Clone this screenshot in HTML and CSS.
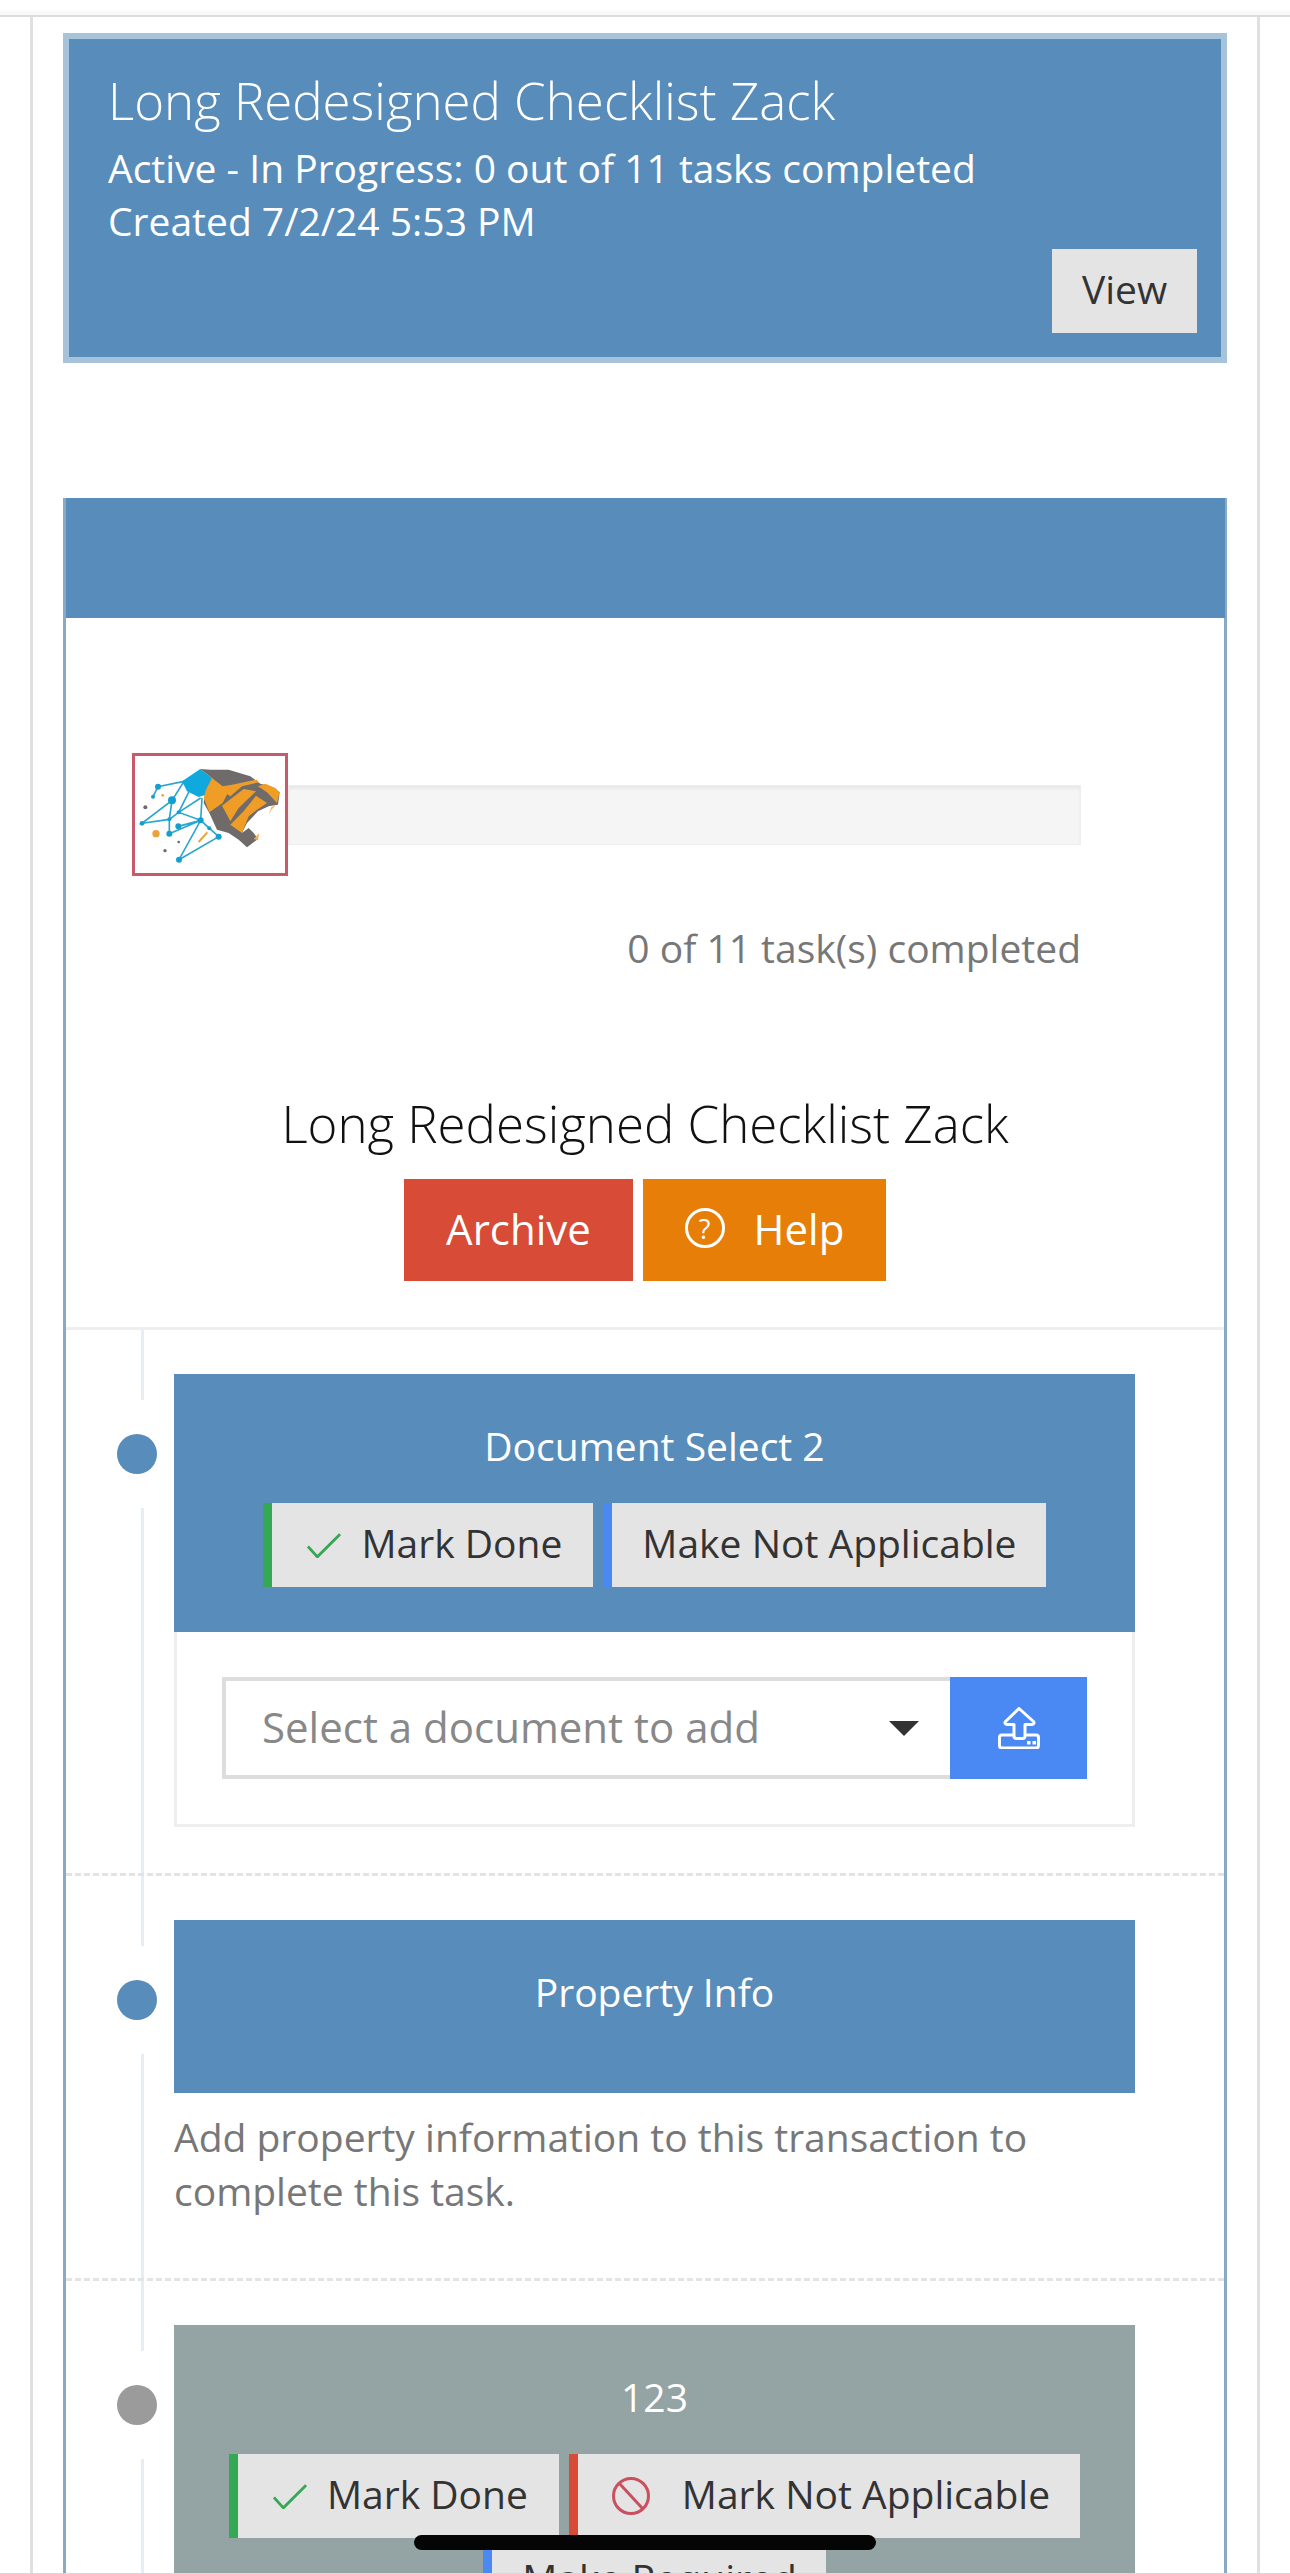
FILE: index.html
```html
<!DOCTYPE html>
<html lang="en">
<head>
<meta charset="utf-8">
<title>Long Redesigned Checklist Zack</title>
<link rel="stylesheet" href="styles.css">
</head>
<body>
<div class="topbar"></div>
<main class="frame">
  <section class="summary">
    <h2 class="summary-title">Long Redesigned Checklist Zack</h2>
    <p class="summary-line">Active - In Progress: 0 out of 11 tasks completed</p>
    <p class="summary-line">Created 7/2/24 5:53 PM</p>
    <div class="summary-actions"><a class="btn-view">View</a></div>
  </section>

  <section class="checklist">
    <header class="checklist-bar"></header>
    <div class="intro">
      <div class="progress-row">
        <div class="logo">
          <svg viewBox="75 79 450 351" width="150" height="117" aria-hidden="true">
            <g stroke="#2ba6cf" stroke-width="5" fill="none">
              <path d="M222 155 144 171 129 201M222 155 186 212 96 281 178 269 206 248 272 272 178 312 178 269 186 212M240 180 206 248M272 205 206 248M276 205 272 272 207 390 326 321 272 272 298 296M205 290 272 272"/>
            </g>
            <g fill="#159fd0">
              <circle cx="144" cy="171" r="9"/><circle cx="129" cy="201" r="6"/><circle cx="186" cy="212" r="12"/>
              <circle cx="96" cy="281" r="7"/><circle cx="178" cy="269" r="6"/><circle cx="206" cy="248" r="6"/>
              <circle cx="272" cy="272" r="9"/><circle cx="205" cy="290" r="9"/><circle cx="178" cy="312" r="9"/>
              <circle cx="298" cy="296" r="6"/><circle cx="326" cy="321" r="9"/><circle cx="207" cy="390" r="9"/>
            </g>
            <g fill="#6d6870">
              <circle cx="106" cy="233" r="6"/><circle cx="165" cy="363" r="5"/><circle cx="206" cy="337" r="4"/>
            </g>
            <circle cx="138" cy="312" r="11" fill="#e9a23c"/>
            <circle cx="158" cy="197" r="4" fill="#e9a23c"/>
            <path d="M266 337 292 308" stroke="#e9a23c" stroke-width="6" fill="none"/>
            <g transform="translate(66 70)">
              <polygon fill="#0fa9de" points="150,85 205,48 240,75 222,125 200,132 165,115"/>
              <polygon fill="#6f6b6b" points="205,48 235,50 290,50 355,70 385,92 415,100 443,118 438,155 410,160 378,175 345,210 330,240 350,225 365,240 378,258 345,283 320,260 290,240 255,230 232,180 215,150 218,125 240,75"/>
              <polygon fill="#f09d27" points="240,75 272,100 300,95 272,150 232,178 215,135 222,110"/>
              <polygon fill="#f09d27" points="272,115 300,95 375,80 380,88 330,100 295,130"/>
              <polygon fill="#f09d27" points="270,158 335,108 372,115 320,165 295,205 282,180"/>
              <polygon fill="#f09d27" points="372,128 405,150 375,170 350,190 330,240 295,215 335,175"/>
              <polygon fill="#f09d27" points="400,92 430,105 443,118 435,150 405,118 378,100"/>
              <polygon fill="#efae5c" points="410,185 418,162 430,158 418,170"/>
              <polygon fill="#efae5c" points="365,258 382,240 378,262"/>
            </g>
          </svg>
        </div>
        <div class="progress-track"></div>
      </div>
      <p class="progress-count">0 of 11 task(s) completed</p>
      <h2 class="checklist-title">Long Redesigned Checklist Zack</h2>
      <div class="checklist-actions">
        <a class="btn-solid btn-archive">Archive</a>
        <a class="btn-solid btn-help"><span class="help-mark">?</span>Help</a>
      </div>
    </div>

    <div class="steps">
      <article class="step">
        <div class="dot-wrap"><span class="dot dot-blue"></span></div>
        <div class="step-head">
          <h3 class="step-title">Document Select 2</h3>
          <div class="step-buttons">
            <a class="btn-tag tag-green">
              <svg class="ico-check" viewBox="0 0 36 26" aria-hidden="true"><path d="M1 14 11 25 35 1"/></svg>Mark Done</a>
            <a class="btn-tag tag-blue">Make Not Applicable</a>
          </div>
        </div>
        <div class="step-body">
          <div class="doc-picker">
            <div class="doc-select"><span>Select a document to add</span><i class="caret"></i></div>
            <a class="doc-upload">
              <svg viewBox="0 0 42 42" width="42" height="42" aria-hidden="true">
                <path class="up-line" d="M21 1.500 7.500 14.500c-1 1-.5 3 1.200 3H16V29c0 1.500 1 2.500 2.500 2.500h6c1.500 0 2.500-1 2.500-2.500V17.500h7.300c1.700 0 2.200-2 1.200-3Z"/>
                <path class="up-line" d="M16 28H4c-1.500 0-2.500 1-2.500 2.500v8c0 1.500 1 2.500 2.500 2.500h34c1.500 0 2.500-1 2.500-2.500v-8c0-1.500-1-2.500-2.500-2.500H27"/>
                <rect x="29" y="34" width="3.500" height="3.500" fill="#fff"/><rect x="34.500" y="34" width="3.500" height="3.500" fill="#fff"/>
              </svg>
            </a>
          </div>
        </div>
      </article>

      <article class="step step-note-wrap">
        <div class="dot-wrap"><span class="dot dot-blue"></span></div>
        <div class="step-head step-head-plain">
          <h3 class="step-title">Property Info</h3>
        </div>
        <p class="step-note">Add property information to this transaction to complete this task.</p>
      </article>

      <article class="step step-last">
        <div class="dot-wrap"><span class="dot dot-grey"></span></div>
        <div class="step-head step-head-grey">
          <h3 class="step-title">123</h3>
          <div class="step-buttons">
            <a class="btn-tag tag-green">
              <svg class="ico-check" viewBox="0 0 36 26" aria-hidden="true"><path d="M1 14 11 25 35 1"/></svg>Mark Done</a>
            <a class="btn-tag tag-red">
              <svg class="ico-ban" viewBox="0 0 38 38" aria-hidden="true"><circle cx="19" cy="19" r="17.500"/><path d="M7 6 31 32"/></svg>Mark Not Applicable</a>
            <a class="btn-tag tag-blue">Make Required</a>
          </div>
        </div>
      </article>
    </div>
  </section>
</main>
<div class="home-indicator"></div>
<div class="bottom-edge"></div>
</body>
</html>
```
FILE: styles.css
```css
* { box-sizing: border-box; }
html, body { margin: 0; padding: 0; height: 2574px; overflow: hidden; background: #fff; }
body { font-family: "Open Sans", sans-serif; color: #333; position: relative; }
h2, h3, p { margin: 0; font-weight: 400; }

.topbar { height: 17px; border-bottom: 2px solid #dcdcdc; box-shadow: inset 0 -4px 0 #f8f8f8; }

.frame {
  margin: 0 30px;
  height: 2557px;
  padding: 16px 30px 0;
  border-left: 3px solid #e0e0e0;
  border-right: 3px solid #e0e0e0;
}

.summary {
  height: 330px;
  padding: 26px 24px 24px 39px;
  background: #578cbb;
  border: 6px solid #a7c3da;
  color: #fff;
  display: flex;
  flex-direction: column;
}
.summary-title { font-size: 51px; font-weight: 300; line-height: 70px; margin-bottom: 6px; }
.summary-line { font-size: 39px; line-height: 53px; }
.summary-actions { margin-top: auto; display: flex; justify-content: flex-end; }
.btn-view {
  width: 145px; height: 84px;
  padding-bottom: 5px;
  display: flex; align-items: center; justify-content: center;
  background: #e4e4e4; color: #333; font-size: 39px;
}

.checklist {
  margin-top: 135px;
  height: 2100px;
  border: 3px solid #8aa9c4;
  border-top: 0;
  border-bottom: 0;
}
.checklist-bar { height: 120px; background: #578cbb; margin-right: -1px; }

.intro {
  padding: 135px 66px 46px;
  border-bottom: 3px solid #eeeeee;
  text-align: center;
}
.progress-row { display: flex; align-items: center; margin-right: 77px; }
.logo {
  width: 156px; height: 123px; flex: none;
  border: 3px solid #c75b6b; background: #fff;
  display: flex; align-items: center; justify-content: center;
}
.progress-track { flex: 1; height: 60px; background: #f5f5f5; border: 1px solid #eeeeee; box-shadow: inset 0 3px 3px rgba(0,0,0,.05); }
.progress-count { text-align: right; font-size: 39px; line-height: 54px; color: #777; margin: 45px 77px 0 0; }
.checklist-title { font-size: 51px; line-height: 70px; font-weight: 300; color: #111; margin-top: 113px; }
.checklist-actions { display: flex; justify-content: center; gap: 10px; margin-top: 21px; }
.btn-solid {
  height: 102px;
  padding-bottom: 4px;
  display: flex; align-items: center; justify-content: center;
  color: #fff; font-size: 42px;
}
.btn-archive { width: 229px; background: #d84b37; }
.btn-help { width: 243px; background: #e67e07; }
.help-mark {
  width: 40px; height: 40px; margin-right: 29px;
  border: 3px solid #fff; border-radius: 50%;
  display: flex; align-items: center; justify-content: center;
  font-size: 27px; line-height: 1;
}

.steps {
  background: linear-gradient(#e6eef3, #e6eef3) 75px 0 / 3px 100% no-repeat;
}
.step {
  position: relative;
  padding: 44px 89px 46px 108px;
  border-bottom: 3px dashed #e3e3e3;
}
.step-note-wrap { padding-bottom: 60px; }
.step-last { border-bottom: 0; padding-bottom: 0; }

.dot-wrap {
  position: absolute;
  left: 43px; top: 70px;
  width: 56px; padding: 34px 8px;
  background: #fff;
}
.dot { display: block; width: 40px; height: 40px; border-radius: 50%; }
.dot-blue { background: #578cbb; }
.dot-grey { background: #9b9b9b; }

.step-head {
  background: #578cbb;
  color: #fff;
  padding: 43px 0 45px;
  text-align: center;
}
.step-head-plain { height: 173px; }
.step-head-grey { background: #94a3a3; }
.step-title { font-size: 39px; line-height: 58px; font-weight: 400; }
.step-buttons {
  display: flex; flex-wrap: wrap; justify-content: center;
  gap: 0 10px; margin-top: 28px;
}
.btn-tag {
  height: 84px;
  padding: 0 29px 5px 30px;
  display: flex; align-items: center;
  background: #e4e4e4; color: #333;
  font-size: 39px;
  border-left: 9px solid #578cbb;
}
.tag-green { border-left-color: #34a853; padding-left: 35px; padding-right: 31px; }
.tag-blue { border-left-color: #4a89f3; }
.tag-red { border-left-color: #d84b37; padding-left: 34px; padding-right: 30px; }
.ico-check { width: 34px; height: 25px; margin: 5px 20px 0 0; flex: none; }
.ico-check path { fill: none; stroke: #34a853; stroke-width: 3; }
.ico-ban { width: 38px; height: 38px; margin: 5px 32px 0 0; flex: none; }
.ico-ban circle, .ico-ban path { fill: none; stroke: #c9505e; stroke-width: 3; }

.step-body { padding: 45px; border: 3px solid #eeeeee; border-top: 0; }
.doc-picker { display: flex; height: 102px; }
.doc-select {
  flex: 1;
  display: flex; align-items: center; justify-content: space-between;
  padding: 0 31px 0 36px;
  border: 4px solid #dddddd; border-right: 0;
  font-size: 42px; color: #888;
}
.doc-select span { margin-bottom: 4px; }
.caret {
  width: 0; height: 0;
  border-left: 15px solid transparent;
  border-right: 15px solid transparent;
  border-top: 15px solid #333;
}
.doc-upload {
  width: 137px; flex: none;
  display: flex; align-items: center; justify-content: center;
  background: #4a89f3;
}
.up-line { fill: none; stroke: #fff; stroke-width: 3; stroke-linejoin: round; }

.step-note { font-size: 39px; line-height: 54px; color: #777; margin-top: 17px; }

.home-indicator {
  position: absolute;
  left: 414px; top: 2535px;
  width: 462px; height: 15px;
  border-radius: 8px;
  background: #050505;
}
.bottom-edge {
  position: absolute;
  left: 0; right: 0; bottom: 0;
  height: 1px;
  background: #d8d8d8;
}
```
